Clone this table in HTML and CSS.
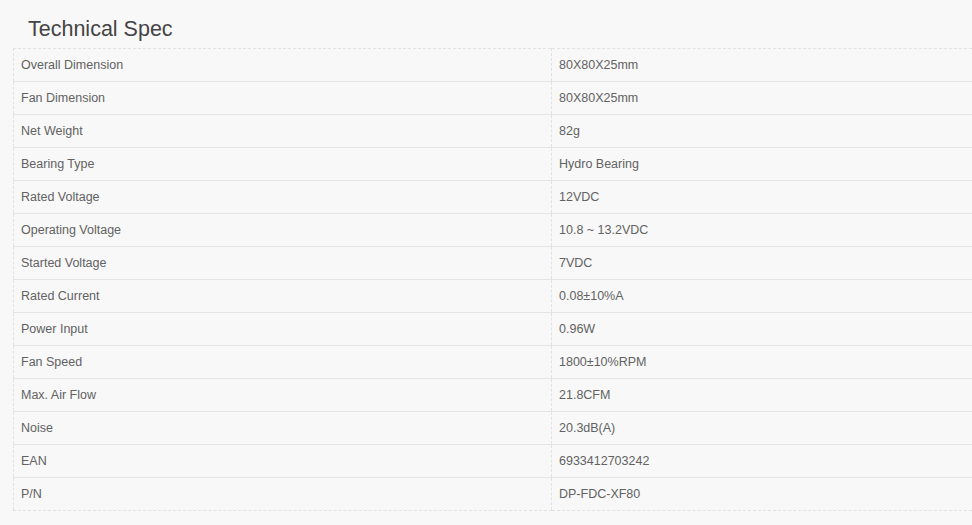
FILE: index.html
```html
<!DOCTYPE html>
<html>
<head>
<meta charset="utf-8">
<link rel="stylesheet" href="styles.css">
</head>
<body>
<div class="spec">
  <h2 class="spec-title">Technical Spec</h2>
  <table class="spec-table">
    <colgroup><col class="col-name"><col class="col-value"></colgroup>
    <tr><td>Overall Dimension</td><td>80X80X25mm</td></tr>
    <tr><td>Fan Dimension</td><td>80X80X25mm</td></tr>
    <tr><td>Net Weight</td><td>82g</td></tr>
    <tr><td>Bearing Type</td><td>Hydro Bearing</td></tr>
    <tr><td>Rated Voltage</td><td>12VDC</td></tr>
    <tr><td>Operating Voltage</td><td>10.8 ~ 13.2VDC</td></tr>
    <tr><td>Started Voltage</td><td>7VDC</td></tr>
    <tr><td>Rated Current</td><td>0.08±10%A</td></tr>
    <tr><td>Power Input</td><td>0.96W</td></tr>
    <tr><td>Fan Speed</td><td>1800±10%RPM</td></tr>
    <tr><td>Max. Air Flow</td><td>21.8CFM</td></tr>
    <tr><td>Noise</td><td>20.3dB(A)</td></tr>
    <tr><td>EAN</td><td>6933412703242</td></tr>
    <tr><td>P/N</td><td>DP-FDC-XF80</td></tr>
  </table>
</div>
</body>
</html>
```

FILE: styles.css
```css
html, body {
  margin: 0;
  padding: 0;
  background: #f8f8f8;
  font-family: "Liberation Sans", Arial, sans-serif;
}
.spec {
  padding: 0 0 0 13px;
}
.spec-title {
  margin: 0;
  padding: 17px 0 0 15px;
  height: 48px;
  box-sizing: border-box;
  font-size: 21.5px;
  font-weight: normal;
  color: #444;
  line-height: 24px;
}
.spec-table {
  width: 100%;
  border-collapse: collapse;
  table-layout: fixed;
  border-top: 1px dashed #e2e2e2;
  border-left: 1px dashed #e2e2e2;
  border-bottom: 1px dashed #e2e2e2;
}
.col-name {
  width: 538px;
}
.spec-table td {
  height: 32px;
  padding: 0 0 0 7px;
  font-size: 12.5px;
  color: #626262;
  border-bottom: 1px solid #e4e4e4;
  vertical-align: middle;
  white-space: nowrap;
}
.spec-table tr:last-child td {
  border-bottom: 1px dashed #e2e2e2;
}
.spec-table td + td {
  border-left: 1px dashed #e2e2e2;
}
```
